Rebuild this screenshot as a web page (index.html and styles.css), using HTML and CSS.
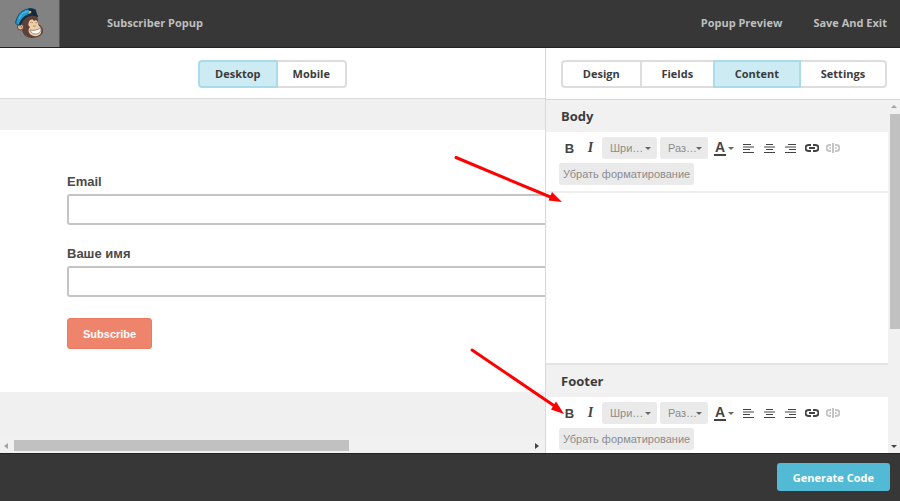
FILE: index.html
```html
<!DOCTYPE html>
<html lang="en">
<head>
<meta charset="UTF-8">
<meta name="viewport" content="width=device-width, initial-scale=1.0">
<title>Subscriber Popup</title>
<link rel="stylesheet" href="styles.css">
</head>
<body>
<!-- Shared toolbar icons -->
<svg class="sprite" aria-hidden="true">
<symbol id="left" viewBox="0 0 12 11"><path d="M0 1.500h8M0 4h11M0 6.500h7M0 9.500h11"/></symbol>
<symbol id="center" viewBox="0 0 12 11"><path d="M2 1.500h7M0 4h11M2 6.500h7M0 9.500h11"/></symbol>
<symbol id="right" viewBox="0 0 12 11"><path d="M3 1.500h8M0 4h11M4 6.500h7M0 9.500h11"/></symbol>
<symbol id="link" viewBox="0 0 14 10"><path d="M6 2H3.500a3 3 0 0 0 0 6H6M8 2h2.500a3 3 0 0 1 0 6H8M4 5h6"/></symbol>
<symbol id="unlink" viewBox="0 0 14 10"><path d="M5 2H3.500a3 3 0 0 0 0 6H5M9 2h1.500a3 3 0 0 1 0 6H9M3.500 5H5M9 5h1.500M7 0v10"/></symbol>
</svg>

<header class="topbar">
<a class="logo" href="#" aria-label="Home">
<svg viewBox="0 0 30 30">
<path fill="#5b4138" d="M6 11C9 4 19 3 22 8c1 3 1 5 1 8 3 1 5 4 5 7 0 4-5 7-11 7-5 0-9-3-10-8-4 0-5-3-4-6z"/>
<circle cx="5.500" cy="19" r="3" fill="#e9bf98" stroke="#5b4138"/>
<path fill="none" stroke="#8b6048" d="M4 18c2-1 3 0 2 2"/>
<path fill="#efcfa9" d="M14 14c1-3 4-3 5-1 2-2 4 0 4 3l1 2c2 1 3 4 2 7-2 4-8 4-11 1-2-2-2-5 0-7-2-1-2-3-1-5z"/>
<path fill="none" stroke="#a87956" stroke-width=".8" d="M15 15q2-2 3 0M20 15q1-1 2 0M18 18h3"/>
<path fill="#fff" stroke="#775044" stroke-width=".6" d="M15 22c4 1 7 0 11-2 0 4-2 6-5 6s-5-1-6-4z"/>
<path fill="#249bd0" stroke="#174967" d="M1 13C3 6 7 2 13 1c3-1 6 0 8 1l-3 4C11 7 7 9 4 17c-2 0-4-1-3-4z"/>
<path fill="#182c42" d="M4 17C6 10 11 6 18 5c3 0 5 2 5 4-7-3-14 0-17 8z"/>
<path fill="#15283e" d="M13 1c3-1 6 0 8 2l2 6-7-3z"/>
<path fill="none" stroke="#68c5e7" d="M4 11c2-5 5-7 9-8"/>
<circle cx="15" cy="4" r="1.300" fill="#e4b44a"/>
</svg>
</a>
<h1>Subscriber Popup</h1>
<nav>
<a href="#">Popup Preview</a>
<a href="#">Save And Exit</a>
</nav>
</header>

<main>
<section class="preview">
<div class="bar device-bar">
<div class="tabs device-tabs">
<button class="active">Desktop</button>
<button>Mobile</button>
</div>
</div>
<div class="canvas">
<form class="popup">
<label for="email">Email</label>
<input id="email" type="text">
<label for="name">Ваше имя</label>
<input id="name" type="text">
<button type="button">Subscribe</button>
</form>
</div>
<div class="scroll-x"><i class="arrow-left"></i><div class="track"><div class="thumb"></div></div><i class="arrow-right"></i></div>
</section>

<aside class="panel">
<div class="bar panel-bar">
<div class="tabs panel-tabs">
<button>Design</button>
<button>Fields</button>
<button class="active">Content</button>
<button>Settings</button>
</div>
</div>
<div class="panel-body">
<div class="editors">
<!-- Body editor -->
<section class="editor">
<h2>Body</h2>
<div class="tools">
<button class="tool bold">B</button>
<button class="tool italic">I</button>
<div class="drop font"><select aria-label="Font"><option>Шри…</option></select></div>
<div class="drop size"><select aria-label="Size"><option>Раз…</option></select></div>
<button class="tool color"><span>A</span></button>
<button class="tool" aria-label="Align left"><svg class="align"><use href="#left"/></svg></button>
<button class="tool" aria-label="Align center"><svg class="align"><use href="#center"/></svg></button>
<button class="tool" aria-label="Align right"><svg class="align"><use href="#right"/></svg></button>
<button class="tool" aria-label="Link"><svg class="link"><use href="#link"/></svg></button>
<button class="tool off" aria-label="Unlink"><svg class="link"><use href="#unlink"/></svg></button>
<button class="clear">Убрать форматирование</button>
</div>
<textarea aria-label="Body text"></textarea>
</section>
<!-- Footer editor -->
<section class="editor">
<h2>Footer</h2>
<div class="tools">
<button class="tool bold">B</button>
<button class="tool italic">I</button>
<div class="drop font"><select aria-label="Font"><option>Шри…</option></select></div>
<div class="drop size"><select aria-label="Size"><option>Раз…</option></select></div>
<button class="tool color"><span>A</span></button>
<button class="tool" aria-label="Align left"><svg class="align"><use href="#left"/></svg></button>
<button class="tool" aria-label="Align center"><svg class="align"><use href="#center"/></svg></button>
<button class="tool" aria-label="Align right"><svg class="align"><use href="#right"/></svg></button>
<button class="tool" aria-label="Link"><svg class="link"><use href="#link"/></svg></button>
<button class="tool off" aria-label="Unlink"><svg class="link"><use href="#unlink"/></svg></button>
<button class="clear">Убрать форматирование</button>
</div>
<textarea aria-label="Footer text"></textarea>
</section>
</div>
<div class="scroll-y"><i class="arrow-up"></i><div class="track"><div class="thumb"></div></div><i class="arrow-down"></i></div>
</div>
</aside>

<!-- Pointers to the two editors -->
<svg class="pointers" viewBox="0 0 120 270" aria-hidden="true">
<path d="M6 9.500l98 41M22 202l84 57"/>
<path class="head" d="M112 54l-13.500-1.500 3.500-8.500zM114 266l-13-4.500 5-8z"/>
</svg>
</main>

<footer class="bottombar">
<button>Generate Code</button>
</footer>
</body>
</html>
```
FILE: styles.css
```css
* {
    box-sizing: border-box;
}
body {
    margin: 0;
    height: 100vh;
    display: flex;
    flex-direction: column;
    font-family: "Open Sans", sans-serif;
    font-size: 11px;
    color: #3c3c3c;
    background: #fff;
}
button, input, select, textarea {
    font: inherit;
    color: inherit;
    margin: 0;
    padding: 0;
    border: 0;
    border-radius: 0;
}
.sprite {
    display: none;
}
/* Top bar */
.topbar {
    flex: none;
    height: 48px;
    display: flex;
    align-items: center;
    background: #373737;
    border-bottom: 1px solid #222;
    color: #bfbfbf;
    font-weight: bold;
}
.logo {
    width: 60px;
    height: 47px;
    padding: 8px 15px;
    background: #828282;
    border-right: 1px solid #555;
}
.logo svg {
    display: block;
    width: 30px;
    height: 30px;
}
.topbar h1 {
    margin: 0 0 2px 47px;
    font-size: 11px;
}
.topbar nav {
    display: flex;
    gap: 31px;
    margin: 0 13px 2px auto;
}
.topbar a {
    color: inherit;
    text-decoration: none;
}
/* Work area */
main {
    position: relative;
    flex: 1;
    min-height: 0;
    display: flex;
}
.preview {
    flex: 1;
    min-width: 0;
    display: flex;
    flex-direction: column;
    background: #f0f0f0;
}
.bar {
    flex: none;
    display: flex;
    background: #fff;
    border-bottom: 1px solid #d8d8d8;
}
.device-bar {
    justify-content: center;
    padding: 12px 0 10px;
}
.panel-bar {
    padding: 12px 13px 11px 15px;
}
.tabs {
    display: flex;
    height: 28px;
}
.tabs button {
    position: relative;
    margin-left: -2px;
    padding-bottom: 2px;
    background: #fff;
    border: 2px solid #ddd;
    font-weight: bold;
}
.tabs button:first-child {
    margin-left: 0;
    border-radius: 4px 0 0 4px;
}
.tabs button:last-child {
    border-radius: 0 4px 4px 0;
}
.tabs .active {
    z-index: 1;
    background: #cdebf2;
    border-color: #a9dce8;
}
.device-tabs button {
    padding: 0 15px 2px;
}
.panel-tabs {
    flex: 1;
}
.panel-tabs button {
    flex: 1 1 auto;
}
.canvas {
    flex: 1;
    min-height: 0;
    padding-top: 31px;
    overflow: hidden;
}
.popup {
    width: 870px;
    padding: 44px 67px 43px;
    background: #fff;
    font-family: "Liberation Sans", sans-serif;
    font-size: 13px;
    font-weight: bold;
    color: #4a4a4a;
}
.popup label {
    display: block;
    margin-bottom: 4px;
    line-height: 16px;
}
.popup input {
    display: block;
    width: 100%;
    height: 31px;
    margin-bottom: 21px;
    padding: 0 8px;
    border: 2px solid #c4c4c4;
    border-radius: 3px;
}
.popup button {
    height: 31px;
    padding: 0 15px;
    background: #ef846c;
    border: 1px solid #ec7a60;
    border-radius: 3px;
    color: #fff;
    font-size: 11px;
}
/* Side panel */
.panel {
    width: 355px;
    display: flex;
    flex-direction: column;
    border-left: 1px solid #d8d8d8;
}
.panel-body {
    flex: 1;
    min-height: 0;
    display: flex;
}
.editors {
    flex: 1;
    overflow: hidden;
}
.editor {
    border-bottom: 2px solid #e4e4e4;
}
.editor h2 {
    margin: 0;
    padding: 0 15px;
    background: #f1f1f1;
    font-size: 13px;
    line-height: 32px;
}
.tools {
    display: flex;
    flex-wrap: wrap;
    row-gap: 4px;
    padding: 5px 0 6px 13px;
    border-bottom: 2px solid #eee;
    font-family: "Liberation Sans", sans-serif;
}
.tool {
    display: flex;
    align-items: center;
    justify-content: center;
    width: 21px;
    height: 22px;
    background: none;
    color: #444;
}
.bold {
    font-weight: bold;
    font-size: 13px;
}
.italic {
    font: italic bold 14px "Liberation Serif", serif;
}
.drop {
    position: relative;
    height: 22px;
    margin-left: 1px;
    margin-right: 2px;
}
.font {
    width: 55px;
}
.size {
    width: 48px;
}
.drop select {
    appearance: none;
    width: 100%;
    height: 22px;
    padding-left: 8px;
    background: #eaeaea;
    border-radius: 3px;
    color: #8c8c8c;
    font-size: 11px;
}
.drop::after, .color::after {
    content: "";
    border: 3px solid transparent;
    border-top-color: #666;
    border-bottom: 0;
}
.drop::after {
    position: absolute;
    right: 6px;
    top: 10px;
}
.color {
    width: 28px;
    gap: 2px;
}
.color span {
    width: 12px;
    border-bottom: 2px solid #444;
    font-size: 14px;
    font-weight: bold;
    line-height: 13px;
}
.align, .link {
    fill: none;
    stroke: currentColor;
}
.align {
    width: 12px;
    height: 11px;
}
.link {
    width: 14px;
    height: 10px;
    stroke-width: 2;
}
.off {
    color: #c4c4c4;
}
.clear {
    height: 22px;
    padding: 0 4px;
    background: #eaeaea;
    border-radius: 3px;
    color: #8c8c8c;
    font-size: 11px;
}
.editor textarea {
    display: block;
    width: 100%;
    height: 170px;
    padding: 8px 15px;
    resize: none;
}
/* Scrollbars */
.scroll-x, .scroll-y {
    flex: none;
    display: flex;
    align-items: center;
    justify-content: space-between;
    background: #f1f1f1;
}
.scroll-x {
    height: 15px;
    padding: 0 6px 0 4px;
}
.scroll-y {
    width: 12px;
    flex-direction: column;
    padding: 5px 0;
}
.track {
    flex: 1;
}
.thumb {
    background: #c1c1c1;
}
.scroll-x .track {
    margin: 0 6px;
}
.scroll-x .thumb {
    width: 65%;
    height: 11px;
}
.scroll-y .track {
    margin: 6px 0;
    width: 10px;
    align-self: flex-end;
}
.scroll-y .thumb {
    height: 66%;
}
.arrow-left, .arrow-right, .arrow-up, .arrow-down {
    border: 3px solid transparent;
}
.arrow-left {
    border-left: 0;
    border-right: 4px solid #a3a3a3;
}
.arrow-right {
    border-right: 0;
    border-left: 4px solid #444;
}
.arrow-up {
    border-top: 0;
    border-bottom-color: #a3a3a3;
}
.arrow-down {
    border-bottom: 0;
    border-top-color: #444;
}
/* Drawn across the preview and the panel */
.pointers {
    position: absolute;
    right: 330px;
    top: 100px;
    width: 120px;
    height: 270px;
    pointer-events: none;
    fill: none;
    stroke: #f00;
    stroke-width: 3;
    stroke-linecap: round;
}
.pointers .head {
    fill: #f00;
    stroke: none;
}
/* Bottom bar */
.bottombar {
    flex: none;
    display: flex;
    justify-content: flex-end;
    padding: 9px 10px;
    height: 48px;
    background: #373737;
    border-top: 1px solid #222;
}
.bottombar button {
    height: 28px;
    padding: 0 16px;
    background: #52bad5;
    border-radius: 3px;
    color: #fff;
    font-weight: bold;
}
```
